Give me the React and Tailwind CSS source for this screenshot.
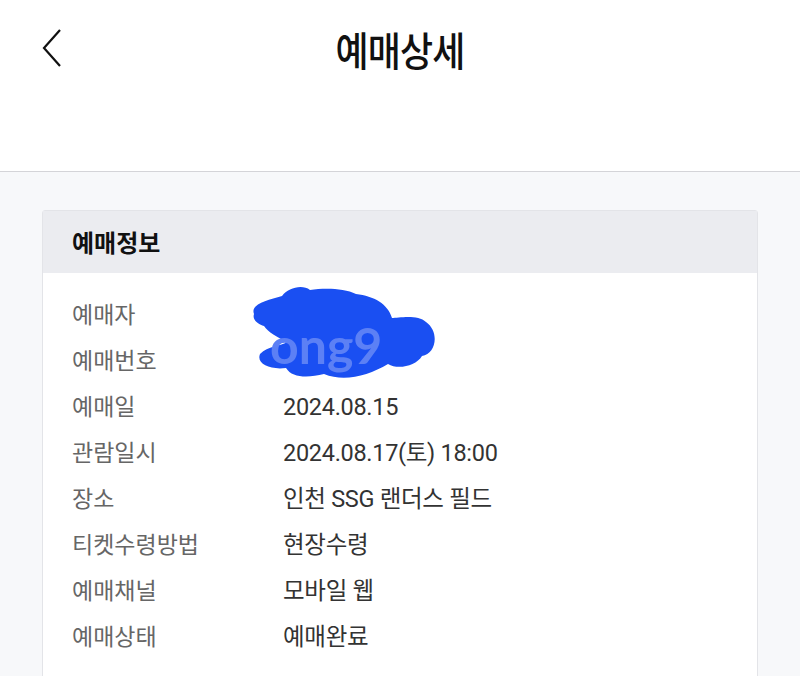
import React from "react";

const rows = [
  { label: "예매자", value: "" },
  { label: "예매번호", value: "" },
  { label: "예매일", value: "2024.08.15" },
  { label: "관람일시", value: "2024.08.17(토) 18:00" },
  { label: "장소", value: "인천 SSG 랜더스 필드" },
  { label: "티켓수령방법", value: "현장수령" },
  { label: "예매채널", value: "모바일 웹" },
  { label: "예매상태", value: "예매완료" },
];

function BackIcon() {
  return (
    <svg width="24" height="40" viewBox="0 0 24 40" fill="none">
      <path d="M20 2 L4 20 L20 38" stroke="#111" strokeWidth="2.2" />
    </svg>
  );
}

function Scribble() {
  return (
    <svg
      className="absolute left-[248px] top-[284px]"
      width="192"
      height="104"
      viewBox="0 0 192 104"
    >
      <path
        d="M6 30 C2 20 20 16 34 12 C40 4 54 0 62 6 C76 4 96 4 108 10 C126 12 140 20 144 34 C150 34 170 30 178 38 C192 48 188 70 174 72 C168 82 150 86 140 80 C120 92 96 98 76 90 C60 94 44 94 38 84 C22 86 8 80 12 70 C20 62 32 62 40 58 C30 54 20 48 16 42 C10 40 4 36 6 30 Z"
        fill="#1a4ff2"
      />
      <text
        x="22"
        y="80"
        fill="#5c80f5"
        fontFamily="Lato, sans-serif"
        fontWeight="700"
        fontSize="50"
      >
        ong9
      </text>
    </svg>
  );
}

export default function App() {
  return (
    <div className="relative w-[800px] h-[676px] overflow-hidden bg-[#f7f8fa] font-['Noto_Sans_CJK_KR','Noto_Sans',sans-serif]">
      <header className="relative h-[172px] bg-white border-b border-[#d4d4d8]">
        <div className="flex items-center h-[96px] px-[40px]">
          <BackIcon />
          <h1 className="flex-1 text-center pr-[24px] text-[36px] font-medium text-[#111] tracking-tight scale-y-110">
            예매상세
          </h1>
        </div>
      </header>
      <div className="px-[42px] pt-[38px]">
        <section className="bg-white border border-[#e3e4e8] rounded-[3px]">
          <div className="h-[62px] flex items-center px-[29px] bg-[#ebecf0]">
            <h2 className="text-[24px] font-bold text-[#111]">예매정보</h2>
          </div>
          <div className="px-[29px] pt-[17px] pb-[20px] flex flex-col">
            {rows.map((row) => (
              <div key={row.label} className="flex items-baseline h-[46px]">
                <span className="w-[211px] text-[23px] leading-[46px] text-[#666]">
                  {row.label}
                </span>
                <span className="text-[23.5px] leading-[46px] text-[#333] font-['Roboto','Noto_Sans_CJK_KR',sans-serif] tracking-[-0.3px]">
                  {row.value}
                </span>
              </div>
            ))}
          </div>
        </section>
      </div>
      <Scribble />
    </div>
  );
}
